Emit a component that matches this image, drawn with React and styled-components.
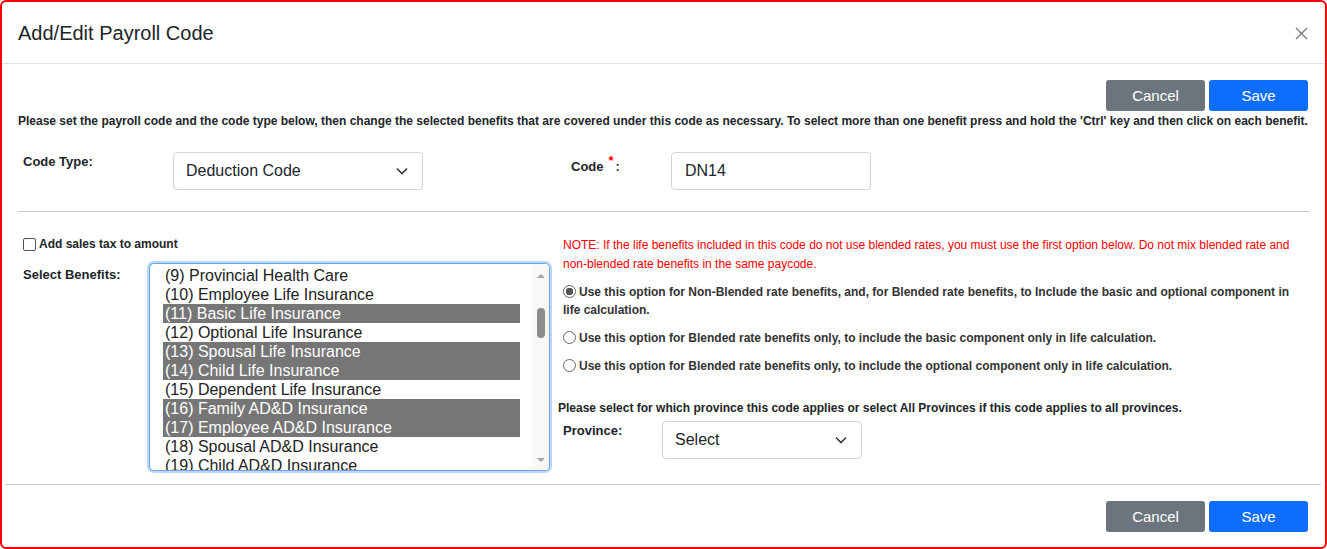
import React, { useState } from "react";
import styled, { createGlobalStyle } from "styled-components";

const GlobalStyle = createGlobalStyle`
  html, body {
    margin: 0;
    padding: 0;
    background: #fff;
  }
  body {
    font-family: "Liberation Sans", Arial, sans-serif;
    color: #212529;
  }
`;

const Modal = styled.div`
  box-sizing: border-box;
  width: 1327px;
  height: 549px;
  border: 2px solid #ff0000;
  border-radius: 6px;
  background: #fff;
  display: flex;
  flex-direction: column;
  overflow: hidden;
`;

const Header = styled.div`
  height: 61px;
  display: flex;
  align-items: center;
  justify-content: space-between;
  padding: 0 16px;
  border-bottom: 1px solid #dee2e6;
`;

const Title = styled.h5`
  margin: 0;
  font-size: 20px;
  font-weight: 400;
  color: #212529;
  padding-top: 1px;
`;

const CloseButton = styled.button`
  width: 16px;
  height: 16px;
  padding: 0;
  border: 0;
  background: none;
  margin-top: 2px;
  display: flex;
  align-items: center;
  justify-content: center;
`;

const Body = styled.div`
  padding: 16px 16px 0 16px;
  display: flex;
  flex-direction: column;
`;

const ButtonBar = styled.div`
  display: flex;
  justify-content: flex-end;
  gap: 4px;
  padding-right: 1px;
`;

const Button = styled.button`
  width: 99px;
  height: 31px;
  border: 0;
  border-radius: 3px;
  font-family: "Liberation Sans", Arial, sans-serif;
  font-size: 15px;
  color: #fff;
  background: ${(p) => (p.$variant === "primary" ? "#0d6efd" : "#6c757d")};
  cursor: pointer;
`;

const Instructions = styled.p`
  margin: 2px 0 0 0;
  font-size: 12px;
  font-weight: 700;
  line-height: 16px;
  color: #212529;
`;

const FormRow = styled.div`
  display: flex;
  align-items: flex-start;
  margin-top: 23px;
  padding-left: 5px;
`;

const Label = styled.label`
  width: ${(p) => p.$width || 150}px;
  flex-shrink: 0;
  font-size: 13px;
  font-weight: 700;
  color: #212529;
  padding-top: ${(p) => p.$top ?? 2}px;
  margin-left: ${(p) => p.$offset || 0}px;
`;

const Required = styled.sup`
  color: #ff0000;
  font-size: 13px;
  margin: 0 2px 0 5px;
  position: relative;
  top: -1px;
`;

const SelectBox = styled.div`
  box-sizing: border-box;
  width: ${(p) => p.$width}px;
  height: 38px;
  border: 1px solid #ced4da;
  border-radius: 4px;
  display: flex;
  align-items: center;
  justify-content: space-between;
  padding: 0 14px 0 12px;
  font-size: 16px;
  color: #212529;
`;

const TextInput = styled.div`
  box-sizing: border-box;
  width: 200px;
  height: 38px;
  border: 1px solid #ced4da;
  border-radius: 4px;
  display: flex;
  align-items: center;
  padding: 0 13px;
  font-size: 16px;
  color: #212529;
`;

const Divider = styled.hr`
  margin: ${(p) => p.$margin};
  border: 0;
  border-top: 1px solid #c8c8c8;
`;

const Lower = styled.div`
  display: flex;
  align-items: flex-start;
`;

const LeftCol = styled.div`
  width: 535px;
  flex-shrink: 0;
  padding-left: 5px;
  display: flex;
  flex-direction: column;
`;

const RightCol = styled.div`
  flex: 1;
  display: flex;
  flex-direction: column;
`;

const CheckRow = styled.label`
  display: flex;
  align-items: center;
  font-size: 12px;
  font-weight: 700;
  margin-top: 25px;
`;

const CheckBox = styled.span`
  box-sizing: border-box;
  width: 13px;
  height: 13px;
  border: 1px solid #555;
  border-radius: 2px;
  margin-right: 3px;
  background: #fff;
`;

const BenefitsRow = styled.div`
  display: flex;
  align-items: flex-start;
  margin-top: 12px;
`;

const ListBox = styled.div`
  box-sizing: border-box;
  width: 401px;
  height: 208px;
  margin-left: -2px;
  border: 1px solid #6aa5f3;
  border-radius: 5px;
  box-shadow: 0 0 0 2px #bcd6f8;
  display: flex;
  overflow: hidden;
  background: #fff;
`;

const Options = styled.div`
  flex: 1;
  padding: 2px 0 0 13px;
  overflow: hidden;
`;

const OptionItem = styled.div`
  height: 19px;
  line-height: 19px;
  font-size: 16px;
  padding-left: 2px;
  margin-right: 12px;
  white-space: nowrap;
  color: ${(p) => (p.$selected ? "#fff" : "#212121")};
  background: ${(p) => (p.$selected ? "#767676" : "transparent")};
`;

const ScrollTrack = styled.div`
  width: 17px;
  background: #f8f8f8;
  display: flex;
  flex-direction: column;
  align-items: center;
`;

const Arrow = styled.div`
  width: 0;
  height: 0;
  border-left: 4px solid transparent;
  border-right: 4px solid transparent;
  ${(p) =>
    p.$down
      ? "border-top: 4px solid #a3a3a3; margin-top: auto; margin-bottom: 8px;"
      : "border-bottom: 4px solid #a3a3a3; margin-top: 10px;"}
`;

const Thumb = styled.div`
  width: 8px;
  height: 30px;
  border-radius: 4px;
  background: #8c8c8c;
  margin-top: 30px;
`;

const Note = styled.p`
  margin: 24px 0 0 5px;
  font-size: 12px;
  line-height: 19px;
  color: #ff0000;
`;

const RadioGroup = styled.div`
  display: flex;
  flex-direction: column;
  gap: 10px;
  margin: 9px 0 0 5px;
`;

const RadioRow = styled.label`
  display: block;
  font-size: 12px;
  font-weight: 700;
  line-height: 18px;
  color: #333;
`;

const RadioCircle = styled.span`
  box-sizing: border-box;
  display: inline-block;
  width: 13px;
  height: 13px;
  border-radius: 50%;
  border: 1px solid #666;
  margin-right: 3px;
  vertical-align: -2px;
  background: ${(p) =>
    p.$checked ? "radial-gradient(circle, #555 0 3.5px, #fff 4px)" : "#fff"};
`;

const ProvinceText = styled.p`
  margin: 25px 0 0 0;
  font-size: 12px;
  font-weight: 700;
  line-height: 16px;
  color: #212529;
`;

const ProvinceRow = styled.div`
  display: flex;
  align-items: flex-start;
  margin-top: 5px;
  padding-left: 5px;
`;

const Footer = styled.div`
  display: flex;
  flex-direction: column;
  padding: 0 4px;
`;

const FooterButtons = styled(ButtonBar)`
  margin-top: 16px;
  padding-right: 13px;
`;

const Chevron = () => (
  <svg width="12" height="8" viewBox="0 0 12 8">
    <path d="M1 1.5l5 5 5-5" fill="none" stroke="#343a40" strokeWidth="1.6" />
  </svg>
);

const CloseIcon = () => (
  <svg width="13" height="13" viewBox="0 0 13 13">
    <path d="M1 1l11 11M12 1L1 12" stroke="#7a7a7a" strokeWidth="1.4" />
  </svg>
);

const benefits = [
  ["(9) Provincial Health Care", false],
  ["(10) Employee Life Insurance", false],
  ["(11) Basic Life Insurance", true],
  ["(12) Optional Life Insurance", false],
  ["(13) Spousal Life Insurance", true],
  ["(14) Child Life Insurance", true],
  ["(15) Dependent Life Insurance", false],
  ["(16) Family AD&D Insurance", true],
  ["(17) Employee AD&D Insurance", true],
  ["(18) Spousal AD&D Insurance", false],
  ["(19) Child AD&D Insurance", false],
];

const options = [
  "Use this option for Non-Blended rate benefits, and, for Blended rate benefits, to Include the basic and optional component in life calculation.",
  "Use this option for Blended rate benefits only, to include the basic component only in life calculation.",
  "Use this option for Blended rate benefits only, to include the optional component only in life calculation.",
];

const App = () => {
  const [option, setOption] = useState(0);

  return (
    <>
      <GlobalStyle />
      <Modal>
        <Header>
          <Title>Add/Edit Payroll Code</Title>
          <CloseButton aria-label="Close">
            <CloseIcon />
          </CloseButton>
        </Header>
        <Body>
          <ButtonBar>
            <Button>Cancel</Button>
            <Button $variant="primary">Save</Button>
          </ButtonBar>
          <Instructions>
            Please set the payroll code and the code type below, then change the
            selected benefits that are covered under this code as necessary. To
            select more than one benefit press and hold the 'Ctrl' key and then
            click on each benefit.
          </Instructions>
          <FormRow>
            <Label>Code Type:</Label>
            <SelectBox $width={250}>
              Deduction Code
              <Chevron />
            </SelectBox>
            <Label $width={100} $offset={148}>
              Code<Required>*</Required>:
            </Label>
            <TextInput>DN14</TextInput>
          </FormRow>
          <Divider $margin="21px 0 0 0" />
          <Lower>
            <LeftCol>
              <CheckRow>
                <CheckBox />
                Add sales tax to amount
              </CheckRow>
              <BenefitsRow>
                <Label $width={128} $top={4}>
                  Select Benefits:
                </Label>
                <ListBox>
                  <Options>
                    {benefits.map(([name, selected]) => (
                      <OptionItem key={name} $selected={selected}>
                        {name}
                      </OptionItem>
                    ))}
                  </Options>
                  <ScrollTrack>
                    <Arrow />
                    <Thumb />
                    <Arrow $down />
                  </ScrollTrack>
                </ListBox>
              </BenefitsRow>
            </LeftCol>
            <RightCol>
              <Note>
                NOTE: If the life benefits included in this code do not use
                blended rates, you must use the first option below. Do not mix
                blended rate and non-blended rate benefits in the same paycode.
              </Note>
              <RadioGroup>
                {options.map((text, i) => (
                  <RadioRow key={i} onClick={() => setOption(i)}>
                    <RadioCircle $checked={option === i} />
                    {text}
                  </RadioRow>
                ))}
              </RadioGroup>
              <ProvinceText>
                Please select for which province this code applies or select All
                Provinces if this code applies to all provinces.
              </ProvinceText>
              <ProvinceRow>
                <Label $width={99} $top={2}>
                  Province:
                </Label>
                <SelectBox $width={200}>
                  Select
                  <Chevron />
                </SelectBox>
              </ProvinceRow>
            </RightCol>
          </Lower>
        </Body>
        <Footer>
          <Divider $margin="13px 0 0 0" />
          <FooterButtons>
            <Button>Cancel</Button>
            <Button $variant="primary">Save</Button>
          </FooterButtons>
        </Footer>
      </Modal>
    </>
  );
};

export default App;
